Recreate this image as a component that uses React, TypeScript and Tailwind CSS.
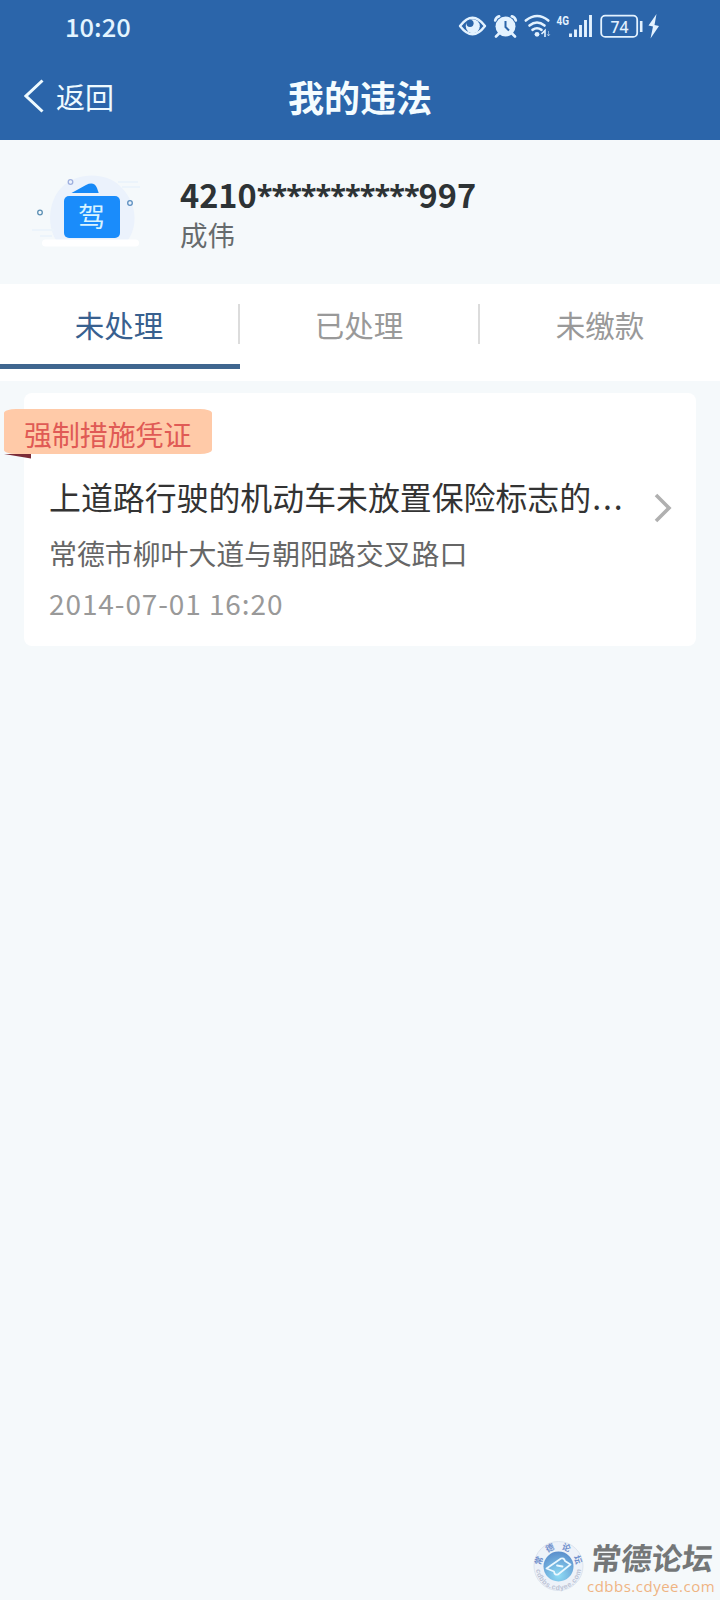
import { useState } from 'react';

const tabs = ['未处理', '已处理', '未缴款'];

const violations = [
  {
    id: 1,
    tag: '强制措施凭证',
    title: '上道路行驶的机动车未放置保险标志的',
    address: '常德市柳叶大道与朝阳路交叉路口',
    time: '2014-07-01 16:20',
  },
];

function StatusIcons() {
  return (
    <svg width="240" height="60" viewBox="0 0 240 60" fill="none" stroke="#e3f2ff">
      {/* Eye */}
      <path d="M20 26Q32.500 9.500 45 26Q32.500 42.500 20 26Z" strokeWidth="2.400" strokeLinejoin="round" />
      <circle cx="32.800" cy="26.300" r="7" fill="#e3f2ff" stroke="none" />
      <circle cx="30" cy="23.300" r="3.600" fill="#2b65aa" stroke="none" />
      {/* Alarm */}
      <circle cx="65.500" cy="26.500" r="10" fill="#e3f2ff" stroke="none" />
      <path d="M55.200 20.500q.5-3 4-4.200M71.800 16.300q3.500 1.200 4 4.200M59 33.500l-3 3M72 33.500l3 3" strokeWidth="2.600" strokeLinecap="round" />
      <path d="M65.500 21v6l3.500 3.500" stroke="#2b65aa" strokeWidth="2" />
      {/* Wifi */}
      <path d="M85.800 20.500q11.500-9 22.500 0M89.500 25.500q7.500-6 15 0M92.500 29.800q4.500-3 9 0" strokeWidth="2.600" strokeLinecap="round" />
      <circle cx="97" cy="34.300" r="2.400" fill="#e3f2ff" stroke="none" />
      <path d="M101.500 34l3.500-3.500V37" strokeWidth="1.600" />
      <path d="M108.500 31v5m-1.500-2l1.500 2 1.500-2" strokeWidth="1" opacity=".5" />
      {/* Signal */}
      <text x="116.500" y="24.500" fill="#e3f2ff" stroke="none" fontFamily="Roboto, sans-serif" fontSize="12.500" fontWeight="700" textLength="12.500" lengthAdjust="spacingAndGlyphs">4G</text>
      <path d="M130.500 33.500V37M135.500 29.500V37M140.500 25V37M145.500 20V37M150.500 15V37" strokeWidth="2.900" />
      {/* Battery */}
      <rect x="161.200" y="15.700" width="36" height="21.200" rx="4" strokeWidth="1.800" />
      <path d="M201.200 21v11" strokeWidth="2.600" />
      <text x="170.500" y="32.500" fill="#e3f2ff" stroke="none" fontFamily="'Noto Sans', sans-serif" fontSize="16.500" fontWeight="500" textLength="18" lengthAdjust="spacingAndGlyphs">74</text>
      <path d="M216.500 14l-8 11.500 4.500 1-2.500 12 8.500-12.500-4.500-1Z" fill="#e3f2ff" stroke="none" />
    </svg>
  );
}

function LicenseIcon() {
  return (
    <svg width="120" height="80" viewBox="26 170 120 80">
      <path d="M56 240C46 224 49 200 62 187C78 172 105 172 120 186C136 201 139 224 128 240Z" fill="#ebf2fc" />
      <path d="M118 182h20M122 187h18M32 230h22M40 236h12" stroke="#ecf4fb" strokeWidth="2" />
      <rect x="42" y="239.500" width="97" height="7" rx="3.500" fill="#fff" />
      <path d="M71.500 193L86 185q8-4 11 3l1.700 5Z" fill="#1789f7" />
      <rect x="64" y="196" width="56" height="42" rx="5" fill="#1a8cfb" />
      <text x="91.500" y="226.500" textAnchor="middle" fontSize="27" fill="#d8f3ff" fontFamily="'Noto Sans CJK SC', sans-serif">驾</text>
      <g fill="none" strokeWidth="1.300">
        <circle cx="70.500" cy="182" r="2.300" stroke="#9fb0df" />
        <circle cx="130" cy="203" r="2.300" stroke="#5c8fc0" />
        <circle cx="40" cy="212.500" r="2.300" stroke="#5d90b4" />
      </g>
    </svg>
  );
}

function Watermark() {
  return (
    <div className="flex h-[70px] w-[200px]">
      <svg className="shrink-0" width="67" height="70" viewBox="0 0 67 70">
        <defs>
          <radialGradient id="globe" cx=".5" cy=".8" r=".8">
            <stop offset="0" stopColor="#8fdcf5" />
            <stop offset="1" stopColor="#5a8dcb" />
          </radialGradient>
          <path id="arcTop" d="M21 36.500A17.500 17.500 0 0 1 56 36.500" />
          <path id="arcBottom" d="M16 37.500A22.500 22.500 0 0 0 61 37.500" />
        </defs>
        <circle cx="38.500" cy="36" r="24.500" fill="#edf2f9" stroke="#dde5ef" />
        <circle cx="38.500" cy="36.500" r="15" fill="url(#globe)" />
        <path d="M26.500 38.500L41 28.500Q44 27.500 45 31L50.500 34.500L38 44.500Q34.500 45.500 34 41.500ZM37 35.500l5.500 1" fill="none" stroke="#eaf8ff" strokeWidth="1.800" strokeLinejoin="round" strokeLinecap="round" />
        <text fontSize="8.500" fontWeight="700" fill="#7090cc" fontFamily="'Noto Sans CJK SC', sans-serif">
          <textPath href="#arcTop" startOffset="1" textLength="52">常德论坛</textPath>
        </text>
        <text fontSize="7" fontWeight="700" fill="#bcc3d4" fontFamily="'Liberation Sans', sans-serif">
          <textPath href="#arcBottom" startOffset="2" textLength="66">cdbbs.cdyee.com</textPath>
        </text>
      </svg>
      <div className="pt-2.5">
        <div className="origin-left -skew-x-6 whitespace-nowrap pl-1 text-[30.5px] font-bold leading-[34px] text-[#747778]">常德论坛</div>
        <div className="whitespace-nowrap font-['Open_Sans',sans-serif] text-[15px] font-medium leading-[24px] tracking-[0.5px] text-[#efb483]">cdbbs.cdyee.com</div>
      </div>
    </div>
  );
}

export default function App() {
  const [active, setActive] = useState(0);

  return (
    <div className="flex h-[1600px] w-[720px] flex-col overflow-hidden bg-[#f5f9fb] font-['Noto_Sans_CJK_SC',sans-serif]">
      {/* Header */}
      <header className="h-[140px] bg-[#2b65aa]">
        <div className="flex h-[60px] pl-[65px]">
          <span className="w-[375px] pt-2 text-[25.5px] font-medium leading-[36px] text-[#e3f4ff]">10:20</span>
          <StatusIcons />
        </div>
        <div className="grid h-[72px] grid-cols-3 items-center">
          <button className="flex items-center pl-6 text-[29px] leading-[40px] text-[#eefaff]">
            <svg width="20" height="34" viewBox="0 0 20 34" fill="none" stroke="currentColor" strokeWidth="3">
              <path d="M18.500 1.500L2 17l16.500 15.500" />
            </svg>
            <span className="pl-3">返回</span>
          </button>
          <h1 className="text-center text-[36px] font-bold leading-[48px] text-[#f4fcff]">我的违法</h1>
        </div>
      </header>

      {/* Driver info */}
      <section className="flex h-[144px] pl-[26px] pt-[30px]">
        <LicenseIcon />
        <div className="pl-[34px] pt-[3px]">
          <div className="flex text-[32.5px] font-bold leading-[42px] text-[#2d3335]">
            <span>4210</span>
            <span className="pt-px font-['Noto_Sans',sans-serif] text-[29px] tracking-[-1px]">***********</span>
            <span>997</span>
          </div>
          <div className="text-[27.5px] leading-[36px] text-[#666b6d]">成伟</div>
        </div>
      </section>

      {/* Tabs */}
      <nav className="grid h-[97px] grid-cols-3 bg-white">
        {tabs.map((tab, i) => (
          <button
            key={tab}
            onClick={() => setActive(i)}
            className={`flex h-[85px] flex-col justify-between pt-5 text-[29.5px] ${active === i ? 'text-[#38608f]' : 'text-[#999]'}`}
          >
            <span className={`h-10 w-full leading-[40px] ${i < 2 ? 'border-r-2 border-[#dcdcdc]' : ''}`}>{tab}</span>
            <span className={`h-[5px] w-full ${active === i ? 'bg-[#3f668f]' : ''}`}></span>
          </button>
        ))}
      </nav>

      {/* Violation list */}
      <main className="flex-1 px-6 pt-3">
        {violations.map((item) => (
          <div key={item.id} className="h-[253px] rounded-lg bg-white pt-4">
            <div className="-ml-5 h-[50px] w-[208px]">
              <div className="h-[45px] rounded-[12px/4px] bg-[#ffcaa8] pl-[20px] text-[27.9px] leading-[50px] text-[#e05a55]">{item.tag}</div>
              <svg width="28" height="5" viewBox="0 0 28 5">
                <path d="M0 0H27V4.500Z" fill="#7b2c38" />
              </svg>
            </div>
            <div className="flex items-start pl-[25px] pr-6">
              <div className="flex-1">
                <h2 className="flex pt-3 text-[31.9px] leading-[50px] text-[#333]">
                  {item.title}
                  <span className="pl-px tracking-[2px]">...</span>
                </h2>
                <p className="pt-[7px] text-[27.9px] leading-[50px] text-[#666]">{item.address}</p>
                <p className="text-[28px] leading-[50px] tracking-[0.9px] text-[#999]">{item.time}</p>
              </div>
              <svg className="mt-[34px]" width="18" height="30" viewBox="0 0 18 30" fill="none" stroke="#b0b0b0" strokeWidth="3.600">
                <path d="M2 2l13 13L2 28" />
              </svg>
            </div>
          </div>
        ))}
      </main>

      <footer className="flex justify-end">
        <Watermark />
      </footer>
    </div>
  );
}
